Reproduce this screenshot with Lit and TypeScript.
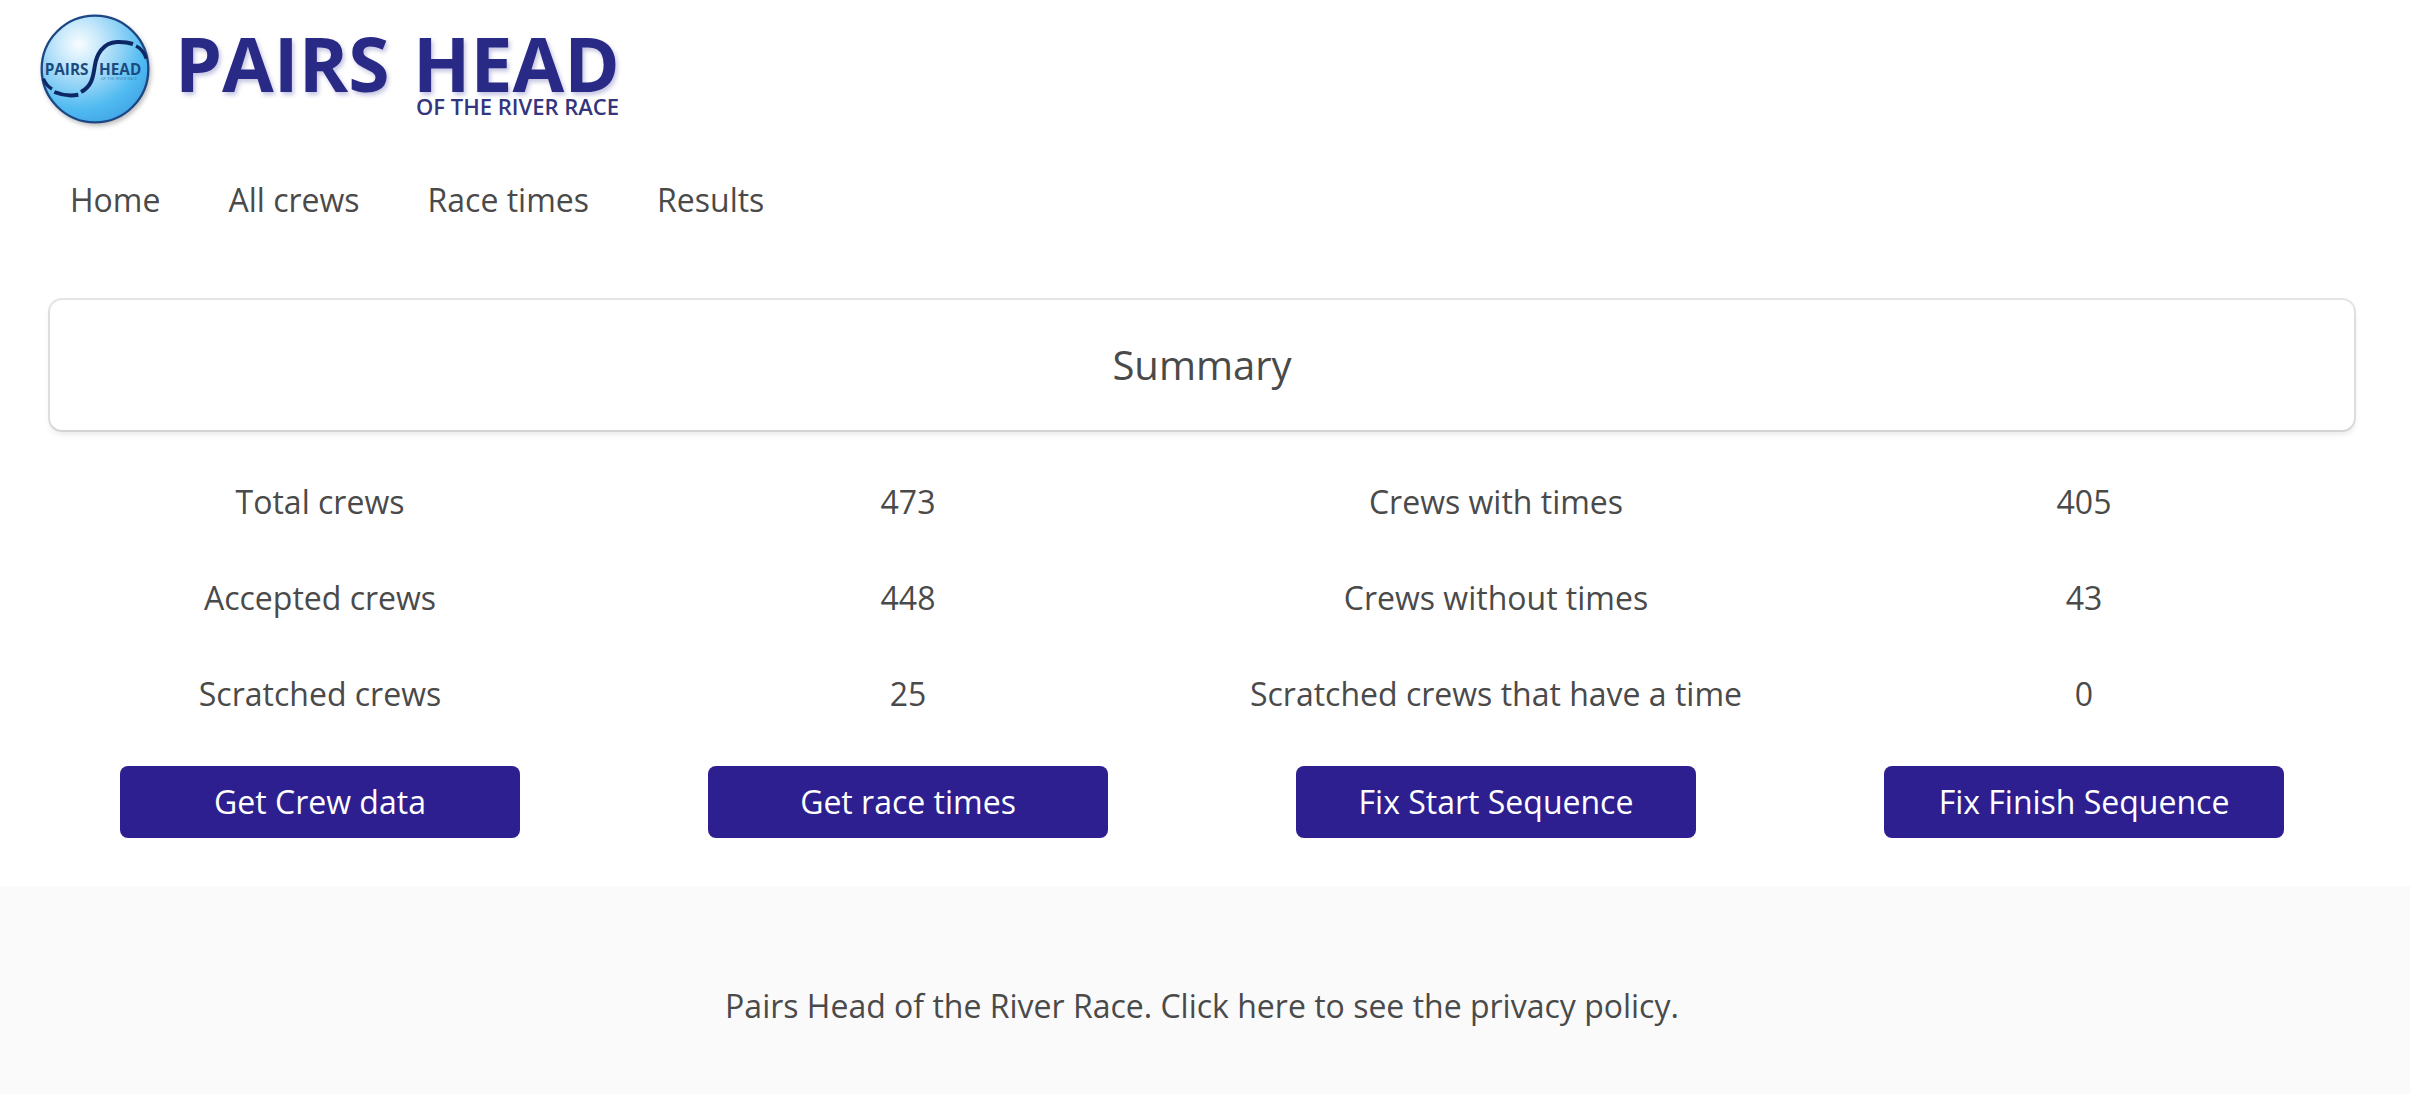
import { LitElement, html, css } from "lit";
import { customElement } from "lit/decorators.js";

interface Stat {
  label: string;
  value: number;
}

const NAV_ITEMS = ["Home", "All crews", "Race times", "Results"];

const STAT_ROWS: [Stat, Stat][] = [
  [
    { label: "Total crews", value: 473 },
    { label: "Crews with times", value: 405 },
  ],
  [
    { label: "Accepted crews", value: 448 },
    { label: "Crews without times", value: 43 },
  ],
  [
    { label: "Scratched crews", value: 25 },
    { label: "Scratched crews that have a time", value: 0 },
  ],
];

const ACTIONS = ["Get Crew data", "Get race times", "Fix Start Sequence", "Fix Finish Sequence"];

@customElement("race-logo")
export class RaceLogo extends LitElement {
  static styles = css`
    :host {
      display: block;
    }
    .logo {
      display: block;
      width: 600px;
      max-width: 100%;
      height: auto;
      font-family: "Open Sans", "Noto Sans", sans-serif;
    }
    .word {
      font-size: 75px;
      font-weight: 700;
      fill: #292a86;
      filter: drop-shadow(2px 3px 2px rgba(60, 60, 160, 0.3));
    }
    .strap {
      font-size: 22px;
      font-weight: 600;
      fill: #34357c;
    }
    .badge {
      font-size: 46px;
      font-weight: 700;
      fill: #1b4a80;
    }
    .badge-strap {
      font-size: 12px;
      fill: #3f86b8;
    }
    .ball {
      filter: drop-shadow(5px 8px 6px rgba(0, 0, 0, 0.25));
    }
  `;

  render() {
    return html`
      <svg class="logo" viewBox="0 0 600 136" role="img" aria-label="Pairs Head of the River Race">
        <defs>
          <radialGradient id="sky" cx="0.35" cy="0.27" r="0.8">
            <stop offset="0" stop-color="#f8fdff" />
            <stop offset="0.2" stop-color="#d2edfc" />
            <stop offset="0.5" stop-color="#8fd2f6" />
            <stop offset="0.75" stop-color="#52bbf1" />
            <stop offset="1" stop-color="#3fa4e6" />
          </radialGradient>
        </defs>
        <svg x="3" y="8" width="130" height="130" viewBox="0 0 390 390">
          <circle class="ball" cx="180" cy="183" r="160" fill="url(#sky)" stroke="#1c4784" stroke-width="7" />
          <g fill="none" stroke="#0d2765" stroke-width="12">
            <path d="M25 212Q34 234 51 243" stroke-width="10" />
            <path d="M58 252Q94 267 130 260" />
            <path d="M138 252C168 236 174 212 179 176C184 142 202 104 246 102Q273 101 294 108" />
            <path d="M303 114Q324 124 334 152" stroke-width="10" />
          </g>
          <text class="badge" x="29" y="201">PAIRS</text>
          <text class="badge" x="192" y="201">HEAD</text>
          <text class="badge-strap" x="198" y="215">OF THE RIVER RACE</text>
        </svg>
        <text class="word" x="143" y="92">PAIRS</text>
        <text class="word" x="381" y="92">HEAD</text>
        <text class="strap" x="384" y="115">OF THE RIVER RACE</text>
      </svg>
    `;
  }
}

@customElement("app-root")
export class AppRoot extends LitElement {
  static styles = css`
    :host {
      display: block;
      min-height: 100vh;
      background: #fff;
      color: #4a4a4a;
      font-family: "Open Sans", "Noto Sans", sans-serif;
      font-size: 32px;
      line-height: 48px;
    }
    .header {
      padding: 0 32px;
    }
    .nav {
      display: flex;
      flex-wrap: wrap;
      gap: 16px 68px;
      padding: 40px 38px 0;
    }
    .nav-link {
      color: inherit;
      text-decoration: none;
    }
    .main {
      padding: 76px 32px 48px 26px;
    }
    .card {
      margin: 0 24px 24px;
      padding: 40px;
      border-radius: 12px;
      background: #fff;
      box-shadow: 0 4px 6px rgba(10, 10, 10, 0.1), 0 0 0 2px rgba(10, 10, 10, 0.1);
      text-align: center;
    }
    .title {
      margin: 0;
      font-size: 40px;
      font-weight: 400;
      line-height: 50px;
    }
    .stats {
      width: 100%;
      table-layout: fixed;
      border-collapse: collapse;
      text-align: center;
    }
    .cell {
      padding: 24px 0;
      font-weight: 400;
    }
    .actions {
      display: grid;
      grid-template-columns: repeat(4, 1fr);
      justify-items: center;
      padding-top: 24px;
    }
    .button {
      width: 400px;
      max-width: 96%;
      padding: 12px 0;
      border: 0;
      border-radius: 8px;
      background: #2e1f91;
      color: #fff;
      font: inherit;
      cursor: pointer;
    }
    .footer {
      padding: 96px 54px 64px 48px;
      background: #fafafa;
      text-align: center;
    }
    .policy {
      color: inherit;
      text-decoration: none;
    }
  `;

  private renderStat(stat: Stat) {
    return html`
      <th class="cell" scope="row">${stat.label}</th>
      <td class="cell">${stat.value}</td>
    `;
  }

  render() {
    return html`
      <header class="header">
        <race-logo></race-logo>
        <nav class="nav" aria-label="Main">
          ${NAV_ITEMS.map((item) => html`<a class="nav-link" href="#">${item}</a>`)}
        </nav>
      </header>
      <main class="main">
        <section class="card"><h1 class="title">Summary</h1></section>
        <table class="stats">
          <tbody>
            ${STAT_ROWS.map((row) => html`<tr>${row.map((stat) => this.renderStat(stat))}</tr>`)}
          </tbody>
        </table>
        <div class="actions">
          ${ACTIONS.map((action) => html`<button class="button" type="button">${action}</button>`)}
        </div>
      </main>
      <footer class="footer">
        Pairs Head of the River Race. <a class="policy" href="#">Click here to see the privacy policy.</a>
      </footer>
    `;
  }
}
